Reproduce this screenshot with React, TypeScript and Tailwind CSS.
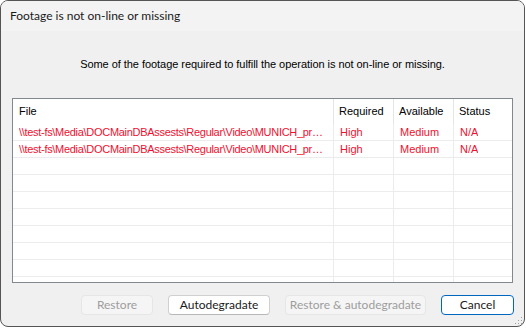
import React from "react";

const rows = [
  {
    file: "\\\\test-fs\\Media\\DOCMainDBAssests\\Regular\\Video\\MUNICH_promo_final.mov",
    required: "High",
    available: "Medium",
    status: "N/A",
  },
  {
    file: "\\\\test-fs\\Media\\DOCMainDBAssests\\Regular\\Video\\MUNICH_promo_final_v2.mov",
    required: "High",
    available: "Medium",
    status: "N/A",
  },
];

const emptyRows = Array.from({ length: 8 });

const Cell = ({ children, last, path }: { children?: React.ReactNode; last?: boolean; path?: boolean }) => (
  <div
    className={`h-[17px] border-b border-[#ececec] ${last ? "" : "border-r"} flex items-center overflow-hidden px-[6px]`}
  >
    <span className={`truncate ${path ? "tracking-[-0.3px]" : ""}`}>{children}</span>
  </div>
);

export default function App() {
  return (
    <div className="w-[526px] h-[329px] bg-white" style={{ fontFamily: '"Liberation Sans", sans-serif' }}>
      <div className="w-[525px] h-[327px] rounded-[8px] border border-[#555555] bg-[#f0f0f0] overflow-hidden flex flex-col">
        {/* title bar */}
        <div className="h-[30px] bg-[#f3f3f3] flex items-center pl-[9px] text-[12px] text-[#1a1a1a]" style={{ fontFamily: "Lato, sans-serif" }}>
          Footage is not on-line or missing
        </div>

        {/* message */}
        <div className="h-[67px] flex items-center justify-center text-[11px] text-black tracking-[-0.05px]">
          Some of the footage required to fulfill the operation is not on-line or missing.
        </div>

        {/* table */}
        <div className="mx-[11px] h-[185px] border border-[#828790] bg-white text-[11px] overflow-hidden">
          <div className="grid grid-cols-[321px_60px_60px_59px] h-[25px] text-black">
            <div className="border-r border-[#e5e5e5] flex items-center px-[6px]">File</div>
            <div className="border-r border-[#e5e5e5] flex items-center px-[5px]">Required</div>
            <div className="border-r border-[#e5e5e5] flex items-center px-[5px]">Available</div>
            <div className="border-r border-[#e5e5e5] flex items-center px-[5px]">Status</div>
          </div>
          {rows.map((r, i) => (
            <div key={i} className="grid grid-cols-[321px_60px_60px_59px] text-[#f01030]">
              <Cell path>{r.file}</Cell>
              <Cell>{r.required}</Cell>
              <Cell>{r.available}</Cell>
              <Cell>{r.status}</Cell>
            </div>
          ))}
          {emptyRows.map((_, i) => (
            <div key={i} className="grid grid-cols-[321px_60px_60px_59px]">
              <Cell />
              <Cell />
              <Cell />
              <Cell />
            </div>
          ))}
        </div>

        {/* buttons */}
        <div
          className="flex items-start pl-[80px] pt-[12px] gap-[15px] text-[12px] whitespace-nowrap"
          style={{ fontFamily: "Lato, sans-serif" }}
        >
          <button className="w-[72px] h-[20px] rounded-[4px] border border-[#e6e6e6] bg-[#f5f5f5] text-[#9d9d9d] flex items-center justify-center">
            Restore
          </button>
          <button className="w-[102px] h-[20px] rounded-[4px] border border-[#d0d0d0] border-b-[#b8b8b8] bg-white text-[#1a1a1a] flex items-center justify-center">
            Autodegradate
          </button>
          <button className="w-[141px] h-[20px] rounded-[4px] border border-[#e6e6e6] bg-[#f5f5f5] text-[#9d9d9d] flex items-center justify-center">
            Restore &amp; autodegradate
          </button>
          <button className="w-[73px] h-[20px] rounded-[4px] border border-[#0067c0] bg-white text-[#1a1a1a] flex items-center justify-center">
            Cancel
          </button>
        </div>
        <div className="flex-1 flex justify-end items-end pr-[1px] pb-[1px]">
          <svg width="8" height="8" viewBox="0 0 8 8">
            <rect x="6" y="0" width="1" height="1" fill="#a0a0a0" />
            <rect x="3" y="3" width="1" height="1" fill="#a0a0a0" />
            <rect x="6" y="3" width="1" height="1" fill="#a0a0a0" />
            <rect x="0" y="6" width="1" height="1" fill="#a0a0a0" />
            <rect x="3" y="6" width="1" height="1" fill="#a0a0a0" />
            <rect x="6" y="6" width="1" height="1" fill="#a0a0a0" />
          </svg>
        </div>
      </div>
    </div>
  );
}
